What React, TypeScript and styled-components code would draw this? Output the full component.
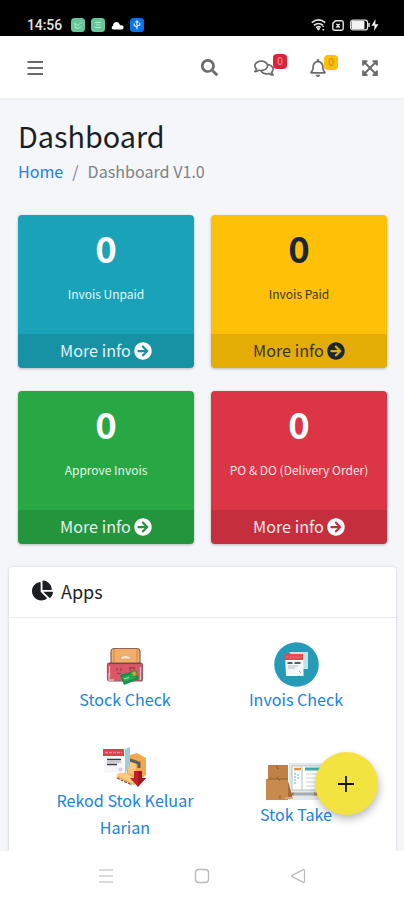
import React from 'react';
import styled, { createGlobalStyle } from 'styled-components';
import {
  FaArrowCircleRight,
  FaChartPie,
  FaExpandArrowsAlt,
  FaRegBell,
  FaRegComments,
  FaSearch,
} from 'react-icons/fa';

const GlobalStyle = createGlobalStyle`
  *, *::before, *::after { box-sizing: border-box; }
  body {
    margin: 0;
    background: #f4f6f9;
    font-family: "Noto Sans CJK SC", "Noto Sans", sans-serif;
    font-size: 16px;
    color: #212529;
  }
  a { color: #2083e0; text-decoration: none; }
  svg { display: block; flex: none; }
`;

const Screen = styled.div`
  position: relative;
  display: flex;
  flex-direction: column;
  width: 404px;
  height: 900px;
  overflow: hidden;
  background: #f4f6f9;
`;

const StatusBar = styled.header`
  display: flex;
  flex: none;
  align-items: flex-start;
  justify-content: space-between;
  height: 36px;
  padding: 17px 25px 0 27px;
  background: #000;
  color: #e4e4e4;
`;

const StatusGroup = styled.div<{ $gap: number }>`
  display: flex;
  align-items: center;
  height: 16px;
  gap: ${(p) => p.$gap}px;
`;

const Clock = styled.span`
  width: 38px;
  font: 500 14px/16px Roboto, sans-serif;
  letter-spacing: -0.1px;
`;

const Navbar = styled.nav`
  display: flex;
  flex: none;
  align-items: center;
  height: 64px;
  padding: 1px 25px 0 27px;
  background: #fff;
  border-bottom: 2px solid #eceff3;
`;

const NavButton = styled.a<{ $left: number }>`
  position: relative;
  display: flex;
  margin-left: ${(p) => p.$left}px;
  color: #6c6c6c;
`;

const Badge = styled.span<{ $color: string; $ink: string; $x: number }>`
  position: absolute;
  top: -4px;
  left: ${(p) => p.$x}px;
  width: 14px;
  height: 15px;
  border-radius: 4px;
  background: ${(p) => p.$color};
  color: ${(p) => p.$ink};
  font-size: 10px;
  line-height: 14px;
  text-align: center;
`;

const Heading = styled.div`
  flex: none;
  height: 115px;
  padding: 18px 18px 0;
`;

const Title = styled.h1`
  margin: 0;
  font-size: 28.8px;
  font-weight: 400;
  line-height: 36px;
  color: #1c1f22;
`;

const Breadcrumb = styled.div`
  display: flex;
  gap: 9px;
  padding-top: 5px;
  font-size: 16.1px;
  line-height: 24px;
  color: #7d8388;
`;

const Stats = styled.section`
  display: grid;
  flex: none;
  grid-template-columns: 176px 176px;
  gap: 23px 17px;
  padding: 0 18px;
`;

const StatBox = styled.article<{ $bg: string; $ink: string }>`
  display: flex;
  flex-direction: column;
  align-items: center;
  height: 153px;
  overflow: hidden;
  border-radius: 4px;
  background: ${(p) => p.$bg};
  box-shadow: 0 1px 3px rgba(0, 0, 0, 0.25);
  color: ${(p) => p.$ink};
`;

const StatValue = styled.strong`
  margin-top: 12px;
  font-size: 36.5px;
  font-weight: 700;
  line-height: 42px;
`;

const StatLabel = styled.span`
  margin-top: 15px;
  font-size: 12px;
  line-height: 20px;
  opacity: 0.88;
`;

const StatFooter = styled.div`
  display: flex;
  align-items: center;
  justify-content: center;
  gap: 3px;
  width: 100%;
  height: 34px;
  margin-top: auto;
  padding-bottom: 1px;
  background: rgba(0, 0, 0, 0.1);
  font-size: 16.2px;
  line-height: 30px;

  span {
    margin-top: -1px;
    opacity: 0.88;
  }
`;

const AppsCard = styled.section`
  flex: 1;
  min-height: 0;
  margin: 23px 8px 0 9px;
  overflow: visible;
  background: #fff;
  border-radius: 4px 4px 0 0;
  box-shadow: 0 0 3px rgba(0, 0, 0, 0.18);
`;

const CardHeader = styled.div`
  display: flex;
  align-items: center;
  gap: 8px;
  height: 51px;
  padding: 0 23px 3px;
  border-bottom: 1px solid #e8eaec;
  font-size: 18px;
  line-height: 28px;
  color: #1c1f22;
`;

const AppGrid = styled.div`
  display: grid;
  grid-template-columns: 171px 171px;
  justify-content: center;
  padding: 24px 0 0 16px;
`;

const AppLink = styled.a<{ $drop: number }>`
  display: flex;
  flex-direction: column;
  align-items: center;
  height: 102px;
  padding: ${(p) => p.$drop}px 10px 0;
  font-size: 16.1px;
  line-height: 27px;
  text-align: center;

  span { margin-top: -1px; }
`;

const SystemBar = styled.footer`
  position: relative;
  display: flex;
  flex: none;
  align-items: flex-start;
  justify-content: space-between;
  height: 49px;
  padding: 17px 98px 0 98px;
  background: #fff;
`;

const AddButton = styled.button`
  position: absolute;
  top: 752px;
  left: 315px;
  display: grid;
  place-items: center;
  width: 63px;
  height: 63px;
  padding: 0 1px 0 0;
  border: 0;
  border-radius: 50%;
  background: #f2e341;
  box-shadow: 1px 4px 8px rgba(0, 0, 0, 0.27);
`;

const MenuBars = () => (
  <svg width="17" height="17" viewBox="0 0 17 17" stroke="#6c6c6c" strokeWidth="2">
    <path d="M.5 3h15.500M.5 9h15.500M.5 15h15.500" />
  </svg>
);

const ChatNotice = () => (
  <svg width="14" height="14" viewBox="0 0 14 14">
    <rect width="14" height="14" rx="3.5" fill="#67c79b" />
    <path d="M4 5.5l3 2 3.2-3M4 4.5v5l3 1 3-2" fill="none" stroke="#a9ecca" />
  </svg>
);

const NoteNotice = () => (
  <svg width="14" height="14" viewBox="0 0 14 14">
    <rect width="14" height="14" rx="3.5" fill="#67c79b" />
    <path d="M4 4.5h6M5 7h4M4 9.5h6" fill="none" stroke="#b4f0d1" />
  </svg>
);

const Cloud = () => (
  <svg width="13" height="9" viewBox="0 0 13 9">
    <path d="M2 8.5a2 2 0 0 1 .1-3.8A3.3 3.3 0 0 1 8.4 3a3 3 0 0 1 .6 1.200h1.500a2.200 2.200 0 0 1 .6 4.300z" fill="#fff" />
  </svg>
);

const BlueNotice = () => (
  <svg width="14" height="14" viewBox="0 0 14 14">
    <rect width="14" height="14" rx="3.5" fill="#0b72ee" />
    <path d="M7 2.8v8.4M4.2 5.5v2.2L7 9M9.8 4.8V7L7 8M5.5 4.3L7 2.8l1.5 1.5" fill="none" stroke="#d6eaff" strokeWidth="1.2" />
  </svg>
);

const Wifi = () => (
  <svg width="15" height="13" viewBox="0 0 15 13">
    <path d="M.8 3.6Q7.5-1.8 14.2 3.6M3 6.2q4.5-3.4 9 0M5.1 8.6q2.4-1.7 4.6-.2" fill="none" stroke="#e4e4e4" strokeWidth="1.7" />
    <path d="M7.5 11.8L5.6 9.4q1.9-1.3 3.8 0zM11 8l1.2-1.5L13.4 8zM11 10l1.2 2 1.2-2z" fill="#e4e4e4" />
  </svg>
);

const SimCard = () => (
  <svg width="12" height="11" viewBox="0 0 12 11">
    <path d="M3.5.8h6a1.7 1.7 0 0 1 1.7 1.7v6a1.7 1.7 0 0 1-1.7 1.7h-7A1.7 1.7 0 0 1 .8 8.500V3.400z" fill="none" stroke="#e4e4e4" strokeWidth="1.4" />
    <path d="M4.200 3.900l3.700 3.600M7.900 3.900L4.200 7.500M6 4v3.500" stroke="#e4e4e4" strokeWidth="1.200" />
  </svg>
);

const Battery = () => (
  <svg width="29" height="12" viewBox="0 0 29 12">
    <rect x=".6" y="1.100" width="17" height="9.800" rx="2.500" fill="none" stroke="#e4e4e4" strokeWidth="1.200" />
    <rect x="1.500" y="2" width="13" height="8" rx="1" fill="#f2f2f2" />
    <path d="M19 4v4" stroke="#e4e4e4" strokeWidth="1.500" />
    <path d="M25.500 0L21.500 6.800h3L24 12l4.500-6.800h-3.200z" fill="#f2f2f2" />
  </svg>
);

const StockIcon = () => (
  <svg width="38" height="40" viewBox="0 0 38 40">
    <rect x="5" y="1.500" width="29" height="16" rx="3" fill="#f3ad68" stroke="#8b6555" strokeWidth="1.200" />
    <path d="M8 2v14M31 2v14" stroke="#c98850" />
    <path d="M14 10q5.500-3 11 0l-1.500 2h-8z" fill="#f9e5cc" stroke="#c99b70" strokeWidth=".6" />
    <rect x="1.500" y="16" width="35" height="18" rx="2" fill="#d95867" stroke="#8b5b62" strokeWidth="1.200" />
    <path d="M3 16.500h32" stroke="#6f4a50" strokeWidth="1.200" />
    <path d="M3 26v7h5M3.500 19v10M34.500 20v13" fill="none" stroke="#f4b7b9" strokeWidth="1.300" />
    <path d="M11 21v3m4-3v3m-4 2q2 1.500 4 0M24 20v4m4-4v3m-5-2h6" fill="none" stroke="#8c3b48" />
    <path d="M14 28l16-5 3 9-15 6z" fill="#17904a" />
    <path d="M16 30l10-3 4 4-11 4z" fill="#25a850" />
    <path d="M18 32l5-1.500" stroke="#a2e3b1" strokeWidth="1.200" />
    <path d="M25 26l4-2 2 4-3 1z" fill="#da9d36" />
  </svg>
);

const InvoiceIcon = () => (
  <svg width="45" height="45" viewBox="0 0 45 45">
    <circle cx="22.500" cy="22.500" r="22.300" fill="#259bb8" />
    <path d="M15 10h19v17h-5z" fill="#c3e3e9" />
    <path d="M11 12h18.500v22H12z" fill="#f5f8f9" />
    <path d="M10.500 12H29v6H10.500z" fill="#e54953" />
    <path d="M12.500 15h14" stroke="#ee8086" strokeWidth="1.200" strokeDasharray="2 1" />
    <path d="M13.500 21h5m2 0h6" stroke="#222b2f" strokeWidth="1.700" />
    <path d="M14 24h10m-10 2h7" stroke="#b3bfc3" />
    <path d="M25 29l2 2" stroke="#9daab0" />
  </svg>
);

const OutgoingIcon = () => (
  <svg width="44" height="42" viewBox="0 0 44 42">
    <path d="M24 10L34 7l9 5v17L31 39l-18-8 11-4z" fill="#f2a64d" />
    <path d="M25 14l8 3v13l-8-3z" fill="#ffc67c" />
    <path d="M13 29l18 9 4-4-16-9z" fill="#ffca82" />
    <path d="M14 32l15 7" stroke="#765144" strokeWidth="1.200" strokeDasharray="3 1" />
    <path d="M27 14l9 3v5" fill="none" stroke="#59605b" strokeWidth="3" />
    <path d="M22 3l5-2v19l-5 8z" fill="#a3cbd4" />
    <path d="M1 3h20v24q-9-1-18 0H1z" fill="#f7f7fa" />
    <path d="M0 3h21v7H0z" fill="#de3f4c" />
    <path d="M2 6.500h17" stroke="#f08e95" strokeWidth="1.500" strokeDasharray="3 1" />
    <path d="M4 13.500h14m-14 5h10" stroke="#343943" strokeWidth="1.700" />
    <path d="M4 16h14" stroke="#9b9da4" />
    <circle cx="17.500" cy="23.500" r="2" fill="#cfd0ef" />
    <path d="M31 25h8v7h4l-8 9-8-9h4z" fill="#c3202a" />
    <path d="M35 25h4v7h4l-8 8z" fill="#9f1724" />
  </svg>
);

const StocktakeIcon = () => (
  <svg width="62" height="41" viewBox="0 0 62 41">
    <rect x="24" y="2" width="38" height="37" fill="#e3e9ea" />
    <rect x="27" y="5" width="35" height="24" fill="#fff" stroke="#b5c3c7" />
    <path d="M29 8h7" stroke="#df963e" strokeWidth="2.500" />
    <path d="M40 8h22" stroke="#42aaa5" strokeWidth="3" />
    <path d="M30 12v11m3-10v6" stroke="#8bcddd" strokeWidth="1.500" strokeDasharray="2 1" />
    <path d="M37 6v23" stroke="#aec0c4" />
    <path d="M41 13h20m-20 4h20m-20 4h20m-20 4h20" stroke="#cad7d8" />
    <path d="M27 33h34" stroke="#a3aeb4" strokeWidth="3" />
    <path d="M26 33h3m20 0h4" stroke="#b77e4d" strokeWidth="3" />
    <path d="M3 4h20v15H3z" fill="#c08145" />
    <path d="M1 18h22v21H1z" fill="#c88a4d" />
    <path d="M23 20l4 14v4h-4z" fill="#a66c37" />
    <path d="M3 18h20M12 4v3l2 1m-2 8l3 4m0 14v4" fill="none" stroke="#93602f" strokeWidth="1.100" />
    <path d="M20 37h8" stroke="#d9a36b" strokeWidth="2" />
  </svg>
);

const stats = [
  { label: 'Invois Unpaid', bg: '#1aa3b8', ink: '#fff' },
  { label: 'Invois Paid', bg: '#fec107', ink: '#1b2631' },
  { label: 'Approve Invois', bg: '#28a745', ink: '#fff' },
  { label: 'PO & DO (Delivery Order)', bg: '#dc3545', ink: '#fff' },
];

const apps = [
  { label: 'Stock Check', Icon: StockIcon, drop: 5 },
  { label: 'Invois Check', Icon: InvoiceIcon, drop: 0 },
  { label: 'Rekod Stok Keluar Harian', Icon: OutgoingIcon, drop: 2 },
  { label: 'Stok Take', Icon: StocktakeIcon, drop: 17 },
];

export default function App() {
  return (
    <>
      <GlobalStyle />
      <Screen>
        <StatusBar>
          <StatusGroup $gap={6}>
            <Clock>14:56</Clock>
            <ChatNotice />
            <NoteNotice />
            <Cloud />
            <BlueNotice />
          </StatusGroup>
          <StatusGroup $gap={6}>
            <Wifi />
            <SimCard />
            <Battery />
          </StatusGroup>
        </StatusBar>
        <Navbar>
          <NavButton $left={0}><MenuBars /></NavButton>
          <NavButton $left={157}><FaSearch size={17} /></NavButton>
          <NavButton $left={36}>
            <FaRegComments size={20} />
            <Badge $color="#dc2439" $ink="#ff9ca7" $x={19}>0</Badge>
          </NavButton>
          <NavButton $left={35}>
            <FaRegBell size={18} />
            <Badge $color="#fdbe08" $ink="#b98a00" $x={15}>0</Badge>
          </NavButton>
          <NavButton $left={34}><FaExpandArrowsAlt size={18} /></NavButton>
        </Navbar>
        <Heading>
          <Title>Dashboard</Title>
          <Breadcrumb>
            <a>Home</a>
            <span>/</span>
            <span>Dashboard V1.0</span>
          </Breadcrumb>
        </Heading>
        <Stats>
          {stats.map((s) => (
            <StatBox key={s.label} $bg={s.bg} $ink={s.ink}>
              <StatValue>0</StatValue>
              <StatLabel>{s.label}</StatLabel>
              <StatFooter>
                <span>More info</span>
                <FaArrowCircleRight size={18} />
              </StatFooter>
            </StatBox>
          ))}
        </Stats>
        <AppsCard>
          <CardHeader>
            <FaChartPie size={21} />
            Apps
          </CardHeader>
          <AppGrid>
            {apps.map(({ label, Icon, drop }) => (
              <AppLink key={label} $drop={drop}>
                <Icon />
                <span>{label}</span>
              </AppLink>
            ))}
          </AppGrid>
        </AppsCard>
        <SystemBar>
          <svg width="16" height="16" viewBox="0 0 16 16" stroke="#d0d0d0" strokeWidth="1.500">
            <path d="M1 2h14M1 8h14M1 14h14" />
          </svg>
          <svg width="16" height="16" viewBox="0 0 16 16" fill="none" stroke="#bcbcbc" strokeWidth="1.400">
            <rect x="1.500" y="1.500" width="13" height="13" rx="3" />
          </svg>
          <svg width="16" height="16" viewBox="0 0 16 16" fill="none" stroke="#bcbcbc" strokeWidth="1.300">
            <path d="M13 1.800L2.200 7.300a.8.8 0 0 0 0 1.400L13 14.200q1.500.5 1.500-1.200V3q0-1.700-1.500-1.200z" />
          </svg>
        </SystemBar>
        <AddButton aria-label="Add">
          <svg width="16" height="16" viewBox="0 0 16 16" stroke="#161407" strokeWidth="1.800">
            <path d="M8 0v16M0 8h16" />
          </svg>
        </AddButton>
      </Screen>
    </>
  );
}
